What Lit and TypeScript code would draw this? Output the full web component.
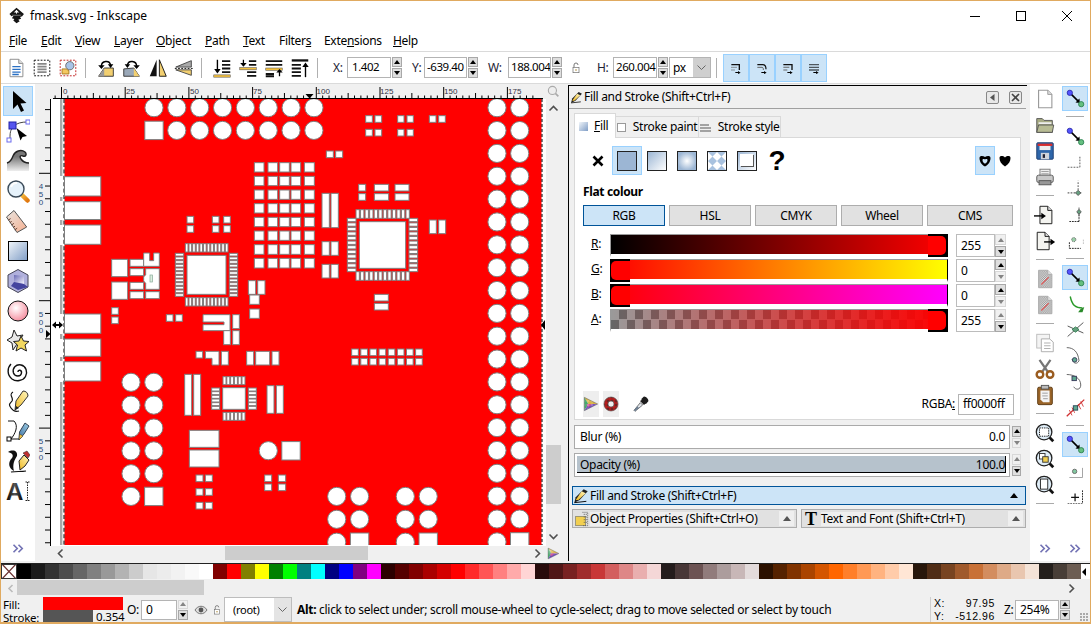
import { LitElement, html, css, svg, TemplateResult } from 'lit';
import { customElement } from 'lit/decorators.js';

const ICONS: Record<string, any> = {
  logo: svg`<path d="M12 1 L2 10 L5 13 L8 12 L5.5 16 L9 17 L7.5 19 L12 23 L16.5 20 L14.5 18 L18.5 16.5 L17 14 L20 13 L22.5 10Z" fill="#151515"/><path d="M12 4 L8 8 L10.5 7.5 L12 10 L13.5 7.5 L16 8Z" fill="#fff"/><path d="M5 11 H19 L17.5 12.5 H6.5Z" fill="#777"/>`,
  docBlue: svg`<path d="M5.5 2.5 H15 L19.5 7 V21.5 H5.5Z" fill="#fff" stroke="#888"/><path d="M15 2.5 V7 H19.5" fill="#ddd" stroke="#888"/><path d="M8 10.5 H17 M8 13.5 H17 M8 16.5 H17 M8 19 H15" stroke="#2a70c4" stroke-width="1.6"/>`,
  selAll: svg`<rect x="3.5" y="3.5" width="17" height="17" fill="#fff" stroke="#000" stroke-dasharray="2 1.5"/><path d="M7 7.5 H17 M7 10.5 H17 M7 13.5 H17 M7 16.5 H17" stroke="#888" stroke-width="2"/>`,
  selInv: svg`<rect x="3.5" y="3.5" width="17" height="17" fill="#fff" stroke="#c01818" stroke-dasharray="2 1.5"/><circle cx="14" cy="9.5" r="4.5" fill="#a8c4e8" stroke="#666"/><path d="M5.5 18.5 V13 H10 L13 15 V18.5Z" fill="#f4c860" stroke="#a87820"/>`,
  rotL: svg`<path d="M4 21 L10 12 H20 V21Z" fill="#f2cf70" stroke="#333"/><path d="M4 21 L10 12 V21Z" fill="#999"/><path d="M7 10 C7 4 16 3 17 9" fill="none" stroke="#000" stroke-width="1.6"/><path d="M3.5 9 H10.5 L7 13Z M14 8 H20 L17 12Z" fill="#000"/>`,
  rotR: svg`<path d="M3 21 V13 L14 12 L20 21Z" fill="#9aa8b8" stroke="#333"/><path d="M14 12 L20 21 H14Z" fill="#f2cf70"/><path d="M7 9 C8 3 17 4 17 10" fill="none" stroke="#000" stroke-width="1.6"/><path d="M4 8 H10 L7 12Z M13.5 9 H20.5 L17 13Z" fill="#000"/>`,
  flipH: svg`<path d="M10.5 3 V21 H3Z" fill="#111"/><path d="M13.5 3 V21 H21Z" fill="#f2cf70" stroke="#111"/>`,
  flipV: svg`<path d="M3 11 L20 4 V11Z" fill="#aaa" stroke="#444"/><path d="M3 14 H20 V20Z" fill="#f2cf70" stroke="#444"/><path d="M2 12.5 H22" stroke="#111" stroke-dasharray="2 1.5"/>`,
  lowBot: svg`<path d="M7 3 V14" stroke="#000" stroke-width="1.5"/><path d="M3.5 13 H10.5 L7 18Z" fill="#000"/><path d="M12 4.5 H21 M12 8.5 H21 M12 12.5 H21 M12 16.5 H21" stroke="#111" stroke-width="2"/><rect x="3" y="19.5" width="18" height="2.5" fill="#f2c040" stroke="#555" stroke-width=".6"/>`,
  lower: svg`<path d="M13 4.5 H21 M13 8.5 H21 M11 16.5 H21 M11 20.5 H21" stroke="#111" stroke-width="2"/><rect x="3" y="11.5" width="18" height="2.5" fill="#f2c040" stroke="#555" stroke-width=".6"/><path d="M7 3 V7" stroke="#000" stroke-width="1.4"/><path d="M3.5 6.5 H10.5 L7 10.5Z" fill="#000"/>`,
  raise: svg`<path d="M3 4.5 H21 M3 8.5 H21 M3 18.5 H12 M3 21 H12" stroke="#111" stroke-width="2"/><rect x="3" y="12" width="18" height="2.5" fill="#f2c040" stroke="#555" stroke-width=".6"/><path d="M18 21 V16" stroke="#000" stroke-width="1.4"/><path d="M14.5 17 H21.5 L18 13Z" fill="#000"/>`,
  raiseTop: svg`<rect x="3" y="2.5" width="18" height="2.5" fill="#111"/><path d="M3 8.5 H13 M3 12.5 H13 M3 16.5 H13 M3 20.5 H13" stroke="#111" stroke-width="2"/><path d="M18 22 V10" stroke="#000" stroke-width="1.5"/><path d="M14.5 11 H21.5 L18 6Z" fill="#000"/>`,
  tg1: svg`<path d="M5 7 H17 V15" fill="none" stroke="#111" stroke-width="2"/><path d="M5 11 H13 M5 15 H10" stroke="#666" stroke-width="1.5" stroke-dasharray="2 1"/><path d="M11 18 H15 V16.5 L19 19 L15 21 V19.5 H11Z" fill="#000"/>`,
  tg2: svg`<path d="M5 7 H13 C17 7 18 10 18 14" fill="none" stroke="#111" stroke-width="1.8"/><path d="M5 11 H12 C14 11 14 13 14 15" fill="none" stroke="#666" stroke-width="1.5"/><path d="M11 18 H15 V16.5 L19 19 L15 21 V19.5 H11Z" fill="#000"/>`,
  tg3: svg`<path d="M5 7 H18 V15" fill="none" stroke="#111" stroke-width="2"/><path d="M5 11 H14 M5 15 H11" stroke="#666" stroke-width="1.6"/><path d="M11 18 H15 V16.5 L19 19 L15 21 V19.5 H11Z" fill="#000"/>`,
  tg4: svg`<path d="M5 7 H19 M5 11 H19 M5 15 H19" stroke="#111" stroke-width="2" stroke-dasharray="2 1"/><path d="M11 18 H15 V16.5 L19 19 L15 21 V19.5 H11Z" fill="#000"/>`,
  lock: svg`<path d="M9 11 V7.5 A3 3 0 0 1 15 7.5" fill="none" stroke="#777" stroke-width="1.5"/><rect x="7.5" y="11" width="9" height="8" fill="#fff" stroke="#666"/><circle cx="12" cy="15" r="1.2" fill="#a83"/>`,
  select: svg`<path d="M7 2 V20 L11.5 15.5 L15 23 L18 21.5 L14.5 14.5 L20.5 14Z" fill="#000"/>`,
  node: svg`<path d="M4 20 C4 14 4 11 8 7 C11 4 16 3 21 3" fill="none" stroke="#444"/><rect x="3" y="3" width="7" height="7" fill="#5555ee" stroke="#2222aa"/><rect x="1" y="19" width="4" height="4" fill="#fff" stroke="#6a6aee"/><rect x="20" y="1" width="4" height="4" fill="#fff" stroke="#6a6aee"/><path d="M10.5 9 L21 17 L16.5 18 L14.5 21.5Z" fill="#000"/>`,
  tweak: svg`<path d="M1 14 C4 13 6 10 7 7 C9 2 15 0 19 3 C21 5 20 8 17 7 C15 6 13 7 15 10 C17 13 20 14 23 14 V22 H1Z" fill="url(#gGray)"/><path d="M1 14 C4 13 6 10 7 7 C9 2 15 0 19 3 C21 5 20 8 17 7 C15 6 13 7 15 10 C17 13 20 14 23 14" fill="none" stroke="#222" stroke-width="1.4"/>`,
  zoom: svg`<path d="M15.5 15.5 L21.5 21.5" stroke="url(#gOrange)" stroke-width="4.5" stroke-linecap="round"/><circle cx="10" cy="10" r="8" fill="#e6f2fb" stroke="#3a4a58" stroke-width="1.4"/><path d="M5 8 A6 6 0 0 1 11 4" fill="none" stroke="#fff" stroke-width="2"/>`,
  measure: svg`<path d="M.5 8 L8 1.5 L20.7 18 L11 23.5Z" fill="url(#gPeach)" stroke="#555"/><path d="M2.2 11.2 L4.6 9.6 M3.9 13.6 L5.7 12.4 M5.5 16 L7.9 14.4 M7.2 18.4 L9 17.2 M8.8 20.8 L11.2 19.2" stroke="#6a4030"/>`,
  rect: svg`<rect x="2.5" y="2.5" width="19" height="19" fill="url(#gBlueD)" stroke="#000"/>`,
  cube: svg`<path d="M12 .5 L22 6 V18 L12 23.5 L2 18 V6Z" fill="#b0b0dc" stroke="#445"/><path d="M8 6 L18 7 V15 L8 13Z" fill="url(#gWhBl)"/><path d="M8 13 L18 15 L22 18 L12 21 L5 17Z" fill="#44449e"/>`,
  circle: svg`<circle cx="12" cy="12" r="10" fill="url(#gPink)" stroke="#111"/>`,
  star: svg`<path d="M8 1 L11 7 L17 6 L14 11 L18 16 L11 15 L7 21 L6 14 L1 11 L6 8Z" fill="#e8e8e8" stroke="#222"/><path d="M15 7 L17.5 12 L23 12.5 L19 16 L20.5 22 L15 19 L10 22 L11.5 16 L7.5 12.5 L13 12Z" fill="#f2d860" stroke="#222"/>`,
  spiral: svg`<path d="M12 13 C12 10 16 11 15.5 14 C15 18 9 18 7.5 14 C6 9 10 5 15 6 C20 7 22 13 19.5 17.5 C17 22 10 23 6 20 C1 16 1 9 5 5" fill="none" stroke="#111" stroke-width="1.4"/>`,
  pencil: svg`<path d="M7 3 C2 6 8 8 6 12 C4 15 2 15 5 19 C7 22 10 23 13 22" fill="none" stroke="#111" stroke-width="1.2"/><path d="M9 21 L10 12 L17 2 C20 2 22 4 22 7 L15 16Z" fill="url(#gYellow)" stroke="#333"/><path d="M9 21 L10 17 L13 19Z" fill="#222"/>`,
  pen: svg`<path d="M2 2 H8 C13 7 9 15 5 20 H13" fill="none" stroke="#111"/><rect x="1" y="18" width="4" height="4" fill="#fff" stroke="#000"/><path d="M13 21 L13.5 13 L19 4 L23 7 L18 15Z" fill="url(#gPen)" stroke="#345"/><path d="M13 21 L13.5 15 L17 17Z" fill="#eec040" stroke="#333" stroke-width=".5"/>`,
  callig: svg`<path d="M2 3 C7 0 12 2 11 7 C9 10 6 15 8 22 C2 19 2 13 6 9 C8 6 6 4 2 3Z" fill="#111"/><path d="M5 23 C10 22 15 23 20 22" fill="none" stroke="#111" stroke-width="1.2"/><path d="M14 21 L13 12 L18 6 L23 11 L19 17Z" fill="url(#gYellow)" stroke="#222"/><path d="M17 4 L21 2 L24 6 L22 9Z" fill="#c03030" stroke="#222" stroke-width=".5"/>`,
  doc: svg`<path d="M5 2.5 H15 L19.5 7 V21.5 H5Z" fill="#fff" stroke="#999" stroke-width="1.2"/><path d="M15 2.5 V7 H19.5" fill="#ddd" stroke="#999"/>`,
  open: svg`<path d="M3 20 V5 H9 L11 7 H20 V20Z" fill="#a8ac84" stroke="#555"/><rect x="5" y="9" width="14" height="2" fill="#eee"/><path d="M3 20 L5 12 H21.5 L20 20Z" fill="#b8bc94" stroke="#555"/>`,
  save: svg`<rect x="3" y="3" width="18" height="18" rx="1" fill="#2e66aa" stroke="#1c3c6e"/><rect x="4" y="4" width="16" height="2.5" fill="#d82c2c"/><rect x="6" y="6.5" width="12" height="4.5" fill="#eee"/><rect x="7.5" y="14" width="9" height="7" fill="#cfd4dc"/><rect x="9.5" y="15.5" width="2.5" height="4" fill="#223"/>`,
  print: svg`<rect x="6.5" y="3.5" width="11" height="8" fill="#eee" stroke="#777"/><path d="M8 6 H16 M8 8.5 H16" stroke="#999"/><rect x="3" y="10" width="18" height="8" rx="2" fill="#c8c8c8" stroke="#555"/><rect x="5.5" y="16" width="13" height="4.5" fill="#999" stroke="#555"/>`,
  imp: svg`<path d="M6.5 2.5 H15 L19.5 7 V21.5 H6.5Z" fill="#f4f4f0" stroke="#111"/><path d="M15 2.5 V7 H19.5" fill="#ddd" stroke="#111"/><path d="M0 13 H9" stroke="#000" stroke-width="1.5"/><path d="M8 9.5 V16.5 L13 13Z" fill="#000"/>`,
  exp: svg`<path d="M3.5 2.5 H12 L16.5 7 V21.5 H3.5Z" fill="#f4f4f0" stroke="#111"/><path d="M12 2.5 V7 H16.5" fill="#ddd" stroke="#111"/><path d="M11 13 H19" stroke="#000" stroke-width="1.5"/><path d="M18 9.5 V16.5 L23 13Z" fill="#000"/>`,
  faint: svg`<path d="M5 2.5 H15 L19.5 7 V21.5 H5Z" fill="url(#pCheck)" stroke="#aaa"/><path d="M8 18 L16 10" stroke="#e05a5a" stroke-width="1.2"/><path d="M15 2.5 V7 H19.5" fill="#e4e4e4" stroke="#aaa"/>`,
  copy: svg`<rect x="3" y="2.5" width="14" height="15" fill="#f4f4f4" stroke="#bbb"/><path d="M8 7.5 H17 L21 11 V21.5 H8Z" fill="#fff" stroke="#aaa"/><path d="M11 12 H18 M11 15 H18 M11 18 H18" stroke="#aaa"/>`,
  cut: svg`<path d="M6 2 L15 15 M18 2 L9 15" stroke="#777" stroke-width="2.4"/><circle cx="6.5" cy="18" r="3.6" fill="none" stroke="#9a5c20" stroke-width="2.6"/><circle cx="17.5" cy="18" r="3.6" fill="none" stroke="#9a5c20" stroke-width="2.6"/>`,
  paste: svg`<rect x="4" y="3.5" width="16" height="19" rx="1.5" fill="#9a6428" stroke="#5c3a14"/><rect x="8" y="1.5" width="8" height="4" fill="#bbb" stroke="#555"/><path d="M7 7 H17 V20 H10 L7 17Z" fill="#f4f4f4"/><path d="M9 10 H15 M9 13 H15 M10 16 H15" stroke="#999"/>`,
  zs: svg`<path d="M17 17 L21 21" stroke="#111" stroke-width="3"/><circle cx="11" cy="11" r="8.5" fill="#e0eef8" stroke="#222" stroke-width="1.4"/><rect x="6" y="6.5" width="10" height="9" fill="#fff" stroke="#111" stroke-dasharray="1.5 1"/>`,
  zd: svg`<path d="M17 17 L21 21" stroke="#111" stroke-width="3"/><circle cx="11" cy="11" r="8.5" fill="#e0eef8" stroke="#222" stroke-width="1.4"/><rect x="6" y="6" width="6" height="6" fill="#fff" stroke="#333"/><rect x="9.5" y="9.5" width="6" height="6" fill="#f2cf50" stroke="#333"/>`,
  zp: svg`<path d="M17 17 L21 21" stroke="#111" stroke-width="3"/><circle cx="11" cy="11" r="8.5" fill="#e0eef8" stroke="#222" stroke-width="1.4"/><rect x="7" y="5.5" width="8" height="11" fill="#fff" stroke="#222"/>`,
  snap: svg`<path d="M7 7 L15 15" stroke="#000" stroke-width="1.8"/><path d="M12 16.5 L17 17 L16.5 12Z" fill="#000"/><circle cx="5.5" cy="5.5" r="3" fill="#5555ff" stroke="#2828a8"/><circle cx="18.5" cy="18.5" r="3" fill="#66c080" stroke="#2a8050"/>`,
  s1: svg`<path d="M3 17.5 H17 M17 17.5 V4" stroke="#666" stroke-width="1.2" stroke-dasharray="2 1.4"/>`,
  s2: svg`<path d="M3 17 H20 M15 17 V3" stroke="#666" stroke-width="1.2" stroke-dasharray="2 1.4"/><path d="M15 14 L18 17 L15 20 L12 17Z" fill="#66a080" stroke="#555"/>`,
  s3: svg`<path d="M5 20 H16 M16 20 V10" stroke="#111" stroke-dasharray="2 1"/><path d="M16 4 V14" stroke="#555" stroke-dasharray="2 1"/><path d="M16 6 L18.5 9 L16 12 L13.5 9Z" fill="#66a080" stroke="#555"/>`,
  s4: svg`<path d="M5 21 H18 M5 14 V21" stroke="#111" stroke-dasharray="2 1"/><path d="M21 11 V17" stroke="#bbb" stroke-dasharray="2 1"/><circle cx="10" cy="11" r="2.4" fill="#9ad0a8" stroke="#555" stroke-dasharray="1.2 .8"/>`,
  s5: svg`<path d="M6 4 C8 14 12 17 20 17" fill="none" stroke="#2a9a2a" stroke-width="1.6"/><path d="M15 22 L20 22 L22 16 L18 18Z" fill="#2a8a2a"/>`,
  s6: svg`<path d="M3 20 L21 4 M3 8 L21 16" stroke="#444"/><path d="M12 9 L16 12 L12 15 L8 12Z" fill="#66a080" stroke="#2a7a4a"/>`,
  s7: svg`<path d="M2 3 C10 3 15 8 16 18 C14 22 10 22 8 16" fill="none" stroke="#555"/><circle cx="11" cy="17" r="2.6" fill="#60a890" stroke="#335"/>`,
  s8: svg`<path d="M2 4 C10 4 18 8 18 16 C18 22 12 22 10 18" fill="none" stroke="#555"/><rect x="8" y="6" width="5" height="5" fill="#60a890" stroke="#335"/>`,
  s9: svg`<path d="M2 22 L22 3" stroke="#d03030" stroke-width="1.5"/><path d="M5 15 L8 21 M8 12 L11 18 M15 8 L18 14 M18 5 L21 11" stroke="#d03030"/><rect x="9.5" y="10" width="5" height="5" fill="#60a890" stroke="#245"/>`,
  s10: svg`<path d="M20 9 V20 H5" fill="none" stroke="#999"/><circle cx="11" cy="13" r="2.5" fill="#80c8a0" stroke="#666"/>`,
  s11: svg`<path d="M3 20 H20" stroke="#666" stroke-dasharray="2 1"/><path d="M20 5 V20" stroke="#111" stroke-dasharray="2 1"/><path d="M7 13 H16 M11.5 8.5 V17.5" stroke="#111" stroke-width="1.4"/>`,
  pen2: svg`<path d="M2 22 L4 14 L16 2 L22 5 L10 18Z" fill="#222"/><path d="M13 5 L19 8 L8 18 L4 18Z" fill="url(#gYellow)"/><path d="M2 22 L20 20" stroke="#111" stroke-width="1.5"/>`,
  objP: svg`<rect x="4" y="8" width="15" height="14" fill="#f2cf50" stroke="#776"/><path d="M14 2 H22 V22 H14 M16 5 H21 M16 9 H21 M16 13 H21 M16 17 H21" fill="none" stroke="#555" stroke-dasharray="2 1"/>`,
  dropper: svg`<path d="M3 23 L1.5 21.5 L11 10 L14.5 13.5Z" fill="#dfe4ea" stroke="#333"/><path d="M3 23 L1.5 21.5 L6.5 15.5 L9 18Z" fill="#6d7f92"/><path d="M10.5 7.5 L16.5 13.5 L18.5 11.5 L19.5 12 L23 8 C24 5 19 0 16 1 L12.5 4.5 L13 6Z" fill="#1c1c1c"/>`,
  wheel: svg`<path d="M2 2 L22 12 L8 12Z" fill="#d8b040"/><path d="M2 2 L8 12 L2 22Z" fill="#40a868"/><path d="M2 22 L8 12 L22 12Z" fill="#7048b8"/><path d="M5 12 L14 12 L8 17Z" fill="#c84890"/><path d="M2 2 L22 12 L2 22Z" fill="url(#pCheckL)" stroke="#555" stroke-width=".7"/>`,
  ring: svg`<circle cx="12" cy="12" r="10.5" fill="#c01c1c" stroke="#555"/><circle cx="12" cy="12" r="10" fill="url(#pDots)"/><circle cx="12" cy="12" r="4.5" fill="#eee" stroke="#555"/>`,
  chev: svg`<path d="M4 6 L10 12 L4 18 M12 6 L18 12 L12 18" fill="none" stroke="#7272b4" stroke-width="2.6"/>`,
};
const ic = (n: string, s = 24) => html`<svg class="ic" width=${s} height=${s} viewBox="0 0 24 24">${ICONS[n]}</svg>`;
const textTool = html`<svg class="ic" width="26" height="28" viewBox="-1 -2 26 28"><text x="0" y="20.5" font-family="Liberation Sans" font-weight="700" font-size="24" letter-spacing="0" fill="url(#gText)">A</text><path d="M19.5 3 H23.5 M19.5 21.5 H23.5 M21.5 3 V21.5" stroke="#222" stroke-dasharray="1.5 1"/></svg>`;

const spin = (up = true, down = true) => html`<div class="spin"><b class="up ${up ? '' : 'off'}"></b><b class="dn ${down ? '' : 'off'}"></b></div>`;

/* ------------- printed-circuit drawing, page coordinates ------------- */
type R = [number, number, number, number];
const z5x = (x: number) => 100 + x / 3, z5y = (y: number) => 95 + y / 3, z6y = (y: number) => 310 + y / 3;
const rectEl = (x0: number, y0: number, x1: number, y1: number) => svg`<rect x=${x0} y=${y0} width=${x1 - x0} height=${y1 - y0}/>`;
const z5 = (a: R[]) => a.map(r => rectEl(z5x(r[0]), z5y(r[1]), z5x(r[2]), z5y(r[3])));
const z6 = (a: R[]) => a.map(r => rectEl(z5x(r[0]), z6y(r[1]), z5x(r[2]), z6y(r[3])));
const poly = (pts: number[], ym: (y: number) => number) => { let s = ''; for (let i = 0; i < pts.length; i += 2) s += `${z5x(pts[i])},${ym(pts[i + 1])} `; return svg`<polygon points=${s}/>`; };
const range = (n: number) => Array.from({ length: n }, (_, i) => i);
const circ = (x: number, y: number) => svg`<circle cx=${x} cy=${y} r="9.1"/>`;
const sq = (x: number, y: number) => rectEl(x - 9.2, y - 9.2, x + 9.2, y + 9.2);

function quad(ym: 'z5' | 'z6', x0: number, x1: number, y0: number, y1: number, n: number, w: number, l: number, gap: number, hx0: number, hx1: number, vy0: number, vy1: number) {
  const m = ym === 'z5' ? z5 : z6;
  const out: R[] = [];
  const ph = (hx1 - hx0 - w) / (n - 1), pv = (vy1 - vy0 - w) / (n - 1);
  range(n).forEach(i => {
    const px = hx0 + ph * i, py = vy0 + pv * i;
    out.push([px, y0 - gap - l, px + w, y0 - gap], [px, y1 + gap, px + w, y1 + gap + l]);
    out.push([x0 - gap - l, py, x0 - gap, py + w], [x1 + gap, py, x1 + gap + l, py + w]);
  });
  out.push([x0, y0, x1, y1]);
  return m(out);
}

const gridPads: R[] = [];
[[463, 492], [504, 533], [539, 568], [573, 602], [613, 643]].forEach(c =>
  [[203, 231], [244, 272], [285, 313], [326, 354], [367, 395], [408, 436], [449, 478], [490, 519]].forEach(r => gridPads.push([c[0], r[0], c[1], r[1]])));
const grid2: R[] = [];
range(8).forEach(i => { const x = 755 + 27.4 * i; grid2.push([x, 117, x + 20, 137], [x, 145, x + 20, 165]); });

const pitch = 22.85;
const pcb = svg`
  <rect x="51" y="99" width="495" height="447" fill="#fff"/>
  <rect x="60" y="99" width="2.4" height="447" fill="#a8a8a8"/>
  <rect x="64.5" y="99" width="477" height="446" fill="#f00"/>
  <g fill="#fff" stroke="none">
    ${[176, 201, 225, 314, 339, 361].map((y, i) => svg`<rect x="52" y=${y} width="13" height=${[21, 19, 20, 20, 18, 21][i]}/>`)}
  </g>
  <line x1="64" y1="99" x2="64" y2="545" stroke="#000" stroke-dasharray="4 2.4"/>
  <line x1="542" y1="99" x2="542" y2="545" stroke="#000" stroke-dasharray="3 2"/>
  <g fill="#fff" stroke="#7f7f7f" stroke-width="1">
    ${[[176.7, 196], [201.7, 219.5], [225, 244.3], [314, 333.3], [339, 356.3], [361.7, 381]].map(r => rectEl(64.5, r[0], 100.8, r[1]))}
    ${range(8).map(i => circ(154 + pitch * i, 107.7))}
    ${sq(154, 130.4)}
    ${range(7).map(i => circ(176.8 + pitch * i, 130.4))}
    ${range(19).map(i => svg`${circ(497, 107.7 + pitch * i)}${circ(519.7, 107.7 + pitch * i)}`)}
    ${circ(497, 541.9)}${sq(519.7, 541.9)}
    ${range(5).map(i => svg`${circ(131, 382.3 + pitch * i)}${circ(153.8, 382.3 + pitch * i)}`)}
    ${circ(131, 496.4)}${sq(153.8, 496.4)}
    ${[[336.7, 359.6], [405.3, 428.2]].map(c => svg`
      ${circ(c[0], 496.4)}${circ(c[1], 496.4)}${circ(c[0], 519.3)}${circ(c[1], 519.3)}${circ(c[0], 542.2)}${sq(c[1], 542.2)}`)}
    ${circ(268.3, 450.7)}${sq(291, 450.8)}
    ${z5(gridPads)}
    ${z5([[797, 62, 817, 82], [825, 62, 845, 82], [797, 103, 817, 123], [825, 103, 845, 123], [893, 62, 912, 82], [921, 62, 940, 82], [893, 103, 912, 123], [921, 103, 940, 123], [988, 62, 1008, 82], [1016, 62, 1036, 82],
      [679, 168, 700, 188], [707, 168, 728, 188],
      [666, 295, 688, 398], [693, 295, 715, 398], [666, 440, 688, 481], [693, 440, 715, 481], [666, 508, 688, 549], [693, 508, 715, 549],
      [261, 364, 281, 384], [261, 392, 281, 412], [337, 364, 357, 384], [337, 392, 357, 412], [371, 364, 391, 384], [371, 392, 391, 412],
      [35, 493, 83, 545], [35, 561, 83, 613], [90, 493, 131, 514], [90, 521, 131, 542], [90, 562, 131, 583], [90, 590, 131, 611], [137, 590, 178, 611],
      [35, 638, 55, 658], [35, 666, 55, 686], [199, 659, 219, 679], [227, 659, 247, 679],
      [445, 557, 467, 598], [473, 557, 495, 598], [449, 600, 478, 628], [449, 642, 478, 670],
      [823, 598, 865, 618], [823, 625, 865, 645],
      [776, 268, 797, 288], [776, 296, 797, 316], [823, 268, 866, 288], [823, 296, 866, 316], [885, 268, 927, 288], [885, 296, 927, 316],
      [988, 375, 1009, 416], [1016, 375, 1037, 416]])}
    ${poly([131, 474, 149, 474, 149, 497, 161, 497, 161, 474, 178, 474, 178, 514, 131, 514], z5y)}
    ${poly([137, 521, 178, 521, 178, 583, 137, 583, 137, 565, 131, 558, 131, 545, 137, 540], z5y)}
    ${quad('z5', 261, 378, 481, 598, 12, 8, 25, 10, 256, 384, 475, 604)}
    ${quad('z5', 778, 917, 380, 520, 12, 10, 26, 10, 768, 928, 370, 530)}
    ${poly([309, 14, 390, 14, 390, 62, 309, 62, 309, 44, 372, 44, 372, 36, 309, 36], z6y)}
    ${poly([316, 124, 357, 124, 357, 165, 336, 165, 336, 145, 316, 145], z6y)}
    ${z6([[398, 14, 418, 56], [371, 62, 391, 104], [398, 62, 418, 104], [288, 124, 308, 144], [364, 124, 385, 165], [440, 124, 461, 165], [467, 124, 509, 165], [516, 124, 537, 165],
      [254, 193, 275, 316], [281, 193, 302, 316], [501, 227, 522, 310], [529, 227, 550, 310],
      [268, 361, 357, 412], [268, 420, 357, 471],
      [288, 495, 309, 515], [316, 495, 337, 515], [288, 536, 309, 556], [316, 536, 337, 556], [288, 577, 309, 597], [316, 577, 337, 597],
      [494, 495, 515, 515], [535, 495, 557, 515], [494, 522, 515, 542], [535, 522, 557, 542]])}
    ${z6(grid2)}
    ${quad('z6', 368, 436, 233, 298, 6, 9, 24, 9, 369, 435, 234, 298)}
  </g>
  <rect x="150" y=${z5y(540)} width="2.6" height="7" fill="#dceee0" stroke="#8a9" stroke-width=".7"/>
  <rect x="51" y="545" width="495" height="2" fill="#fff"/>
  <path d="M52 325 L56 321.5 V324 H59 V321.5 L63 325 L59 328.5 V326 H56 V328.5Z" fill="#000"/>
  <path d="M545 320 L541 325 L545 330Z" fill="#000"/>
`;

const hMajors = [[61, '0'], [124, '25'], [188, '50'], [251, '75'], [314.5, '100'], [378, '125'], [442, '150'], [506, '175']] as [number, string][];
const hruler = svg`
  <path d="M53 98.5 H543" stroke="#000" fill="none"/>
  ${range(76).map(i => { const x = 61 + 6.37 * (i - 1) + .5; if (x < 54) return null; const major = (i - 1) % 10 === 0; const mid = (i - 1) % 5 === 0; return svg`<line x1=${x} x2=${x} y1="98" y2=${major ? 87 : mid ? 93 : 95.5} stroke="#000"/>`; })}
  ${hMajors.map(m => svg`<text x=${m[0] + 2} y="94" class="rt">${m[1]}</text>`)}
  <path d="M305.5 94 H313.5 L309.5 98.5Z" fill="#000"/>`;
const vruler = svg`
  <path d="M50.5 99 V546" stroke="#000" fill="none"/>
  ${range(36).map(i => { const y = 110 + 12.74 * i - .4; const major = Math.abs((y - 174) % 127.4) < 1 || Math.abs((y - 174) % 127.4) > 126.4; return svg`<line x1="50" x2=${major ? 39 : 45} y1=${y} y2=${y} stroke="#000"/>`; })}
  ${[[174, '450'], [301.5, '500'], [428.5, '550']].map(m => (m[1] as string).split('').map((d, i) => svg`<text x="41" y=${(m[0] as number) + 15 + 8 * i} text-anchor="middle" class="rv">${d}</text>`))}
  <path d="M46 330 L50.5 334 L46 338Z" fill="#000"/>`;

const PAL = ['000000', '1a1a1a', '333333', '4d4d4d', '666666', '808080', '999999', 'b3b3b3', 'cccccc', 'e6e6e6', 'ececec', 'f2f2f2', 'f9f9f9', 'ffffff',
  '800000', 'ff0000', '808000', 'ffff00', '008000', '00ff00', '008080', '00ffff', '000080', '0000ff', '800080', 'ff00ff',
  '2b0000', '550000', '800000', 'aa0000', 'd40000', 'ff0000', 'ff2a2a', 'ff5555', 'ff8080', 'ffaaaa', 'ffd5d5',
  '280b0b', '501616', '782121', 'a02c2c', 'c83737', 'd35f5f', 'de8787', 'e9afaf', 'f4d7d7',
  '241c1c', '483737', '6c5353', '917c7c', 'ac9d9d', 'c8b7b7', 'e3dbdb',
  '2b1100', '552200', '803300', 'aa4400', 'd45500', 'ff6600', 'ff7f2a', 'ff9955', 'ffb380', 'ffccaa', 'ffe6d5',
  '28170b', '502d16', '784421', 'a05a2c', 'c87137', 'd38d5f', 'deaa87', 'e9c6af', 'f4e3d7',
  '241f1c', '483e37', '6c5d53'];

const LEFT = ['select', 'node', 'tweak', 'zoom', 'measure', 'rect', 'cube', 'circle', 'star', 'spiral', 'pencil', 'pen', 'callig'];
const CMD: (string | null)[] = ['doc', 'open', 'save', 'print', null, 'imp', 'exp', null, 'faint', 'faint', null, 'copy', 'cut', 'paste', null, 'zs', 'zd', 'zp', null];
const SNAP: (string | null)[] = ['*snap', null, 'snap', 's1', 's2', 's3', 's4', null, '*snap', 's5', 's6', 's7', 's8', 's9', null, '*snap', 's10', 's11'];

const toolCol = (list: (string | null)[], s: number) => list.map(n => n === null ? html`<div class="hsep"></div>` :
  n[0] === '*' ? html`<div class="rtool on">${ic(n.slice(1), s)}</div>` : html`<div class="rtool">${ic(n, s)}</div>`);

@customElement('app-root')
export class AppRoot extends LitElement {
  static styles = css`
    :host { display: block; width: 1091px; height: 624px; overflow: hidden; }
    * { box-sizing: border-box; }
    .win { width: 1091px; height: 624px; border: 1px solid #e0aa60; border-bottom-width: 2px; background: #f0f0f0; display: flex; flex-direction: column;
      font: 12px/14px "Noto Sans", sans-serif; letter-spacing: -.3px; color: #000; }
    .ic { display: block; flex: none; }
    .defs { position: absolute; width: 0; height: 0; }
    .title { height: 29px; background: #fff; display: flex; align-items: center; padding-left: 7px; flex: none; }
    .title .name { margin-left: 5px; letter-spacing: 0; font-size: 12px; }
    .ctrls { margin-left: auto; display: grid; grid-template-columns: 46px 46px 46px; justify-items: center; width: 138px; }
    .menu { height: 22px; background: #fff; border-bottom: 1px solid #dadada; flex: none; display: grid; padding-left: 8px; align-items: center;
      grid-template-columns: 32px 34px 39px 42px 49px 38px 36px 45px 69px auto; }
    .tbar { height: 32px; background: #fff; border-bottom: 1px solid #dadada; flex: none; display: flex; align-items: center; padding-left: 2px; }
    .tb { width: 26px; height: 24px; display: flex; align-items: center; justify-content: center; flex: none; }
    .vsep { width: 1px; height: 20px; background: #b0b0b0; margin: 0 7px 0 4px; flex: none; }
    .lab { flex: none; text-align: left; color: #223; }
    .field { height: 21px; border: 1px solid #b4b4b4; background: #fff; padding: 2px 0 0 4px; flex: none; white-space: nowrap; overflow: hidden; }
    .tbar .field { font-size: 11.5px; letter-spacing: -.45px; padding-top: 2px; }
    .spin { width: 10px; height: 21px; display: flex; flex-direction: column; flex: none; margin-left: 1px; gap: 1px; }
    .spin b { flex: 1; background: #dedede; border: 1px solid #a8a8a8; position: relative; display: block; }
    .spin b::after { content: ""; position: absolute; left: 50%; top: 50%; margin: -2px 0 0 -3px; border: 3px solid transparent; }
    .spin .up::after { border-bottom: 4px solid #000; border-top: 0; }
    .spin .dn::after { border-top: 4px solid #000; border-bottom: 0; }
    .spin b.off { background: #f0f0f0; border-color: #d8d8d8; }
    .spin b.off::after { opacity: .45; }
    .combo { height: 21px; width: 42px; border: 1px solid #b4b4b4; background: #fff; margin-left: 1px; display: flex; align-items: center; padding-left: 3px; flex: none; justify-content: space-between; }
    .combo i { width: 17px; height: 19px; background: #cfcfcf; display: flex; align-items: center; justify-content: center; flex: none; }
    .toggles { display: flex; height: 28px; margin-left: 0; }
    .toggles div { width: 26px; background: #cce4f7; border: 1px solid #99d1ff; display: flex; align-items: center; justify-content: center; }
    .main { flex: none; height: 477px; display: flex; }
    .ltools { width: 34px; background: #fff; flex: none; display: flex; flex-direction: column; align-items: center; padding-top: 2px; }
    .ltool { width: 30px; height: 30px; flex: none; display: flex; align-items: center; justify-content: center; border: 1px solid transparent; }
    .ltool.on, .rtool.on { background: #cce4f7; border: 1px solid #99d1ff; }
    .chevs { margin-top: auto; height: 20px; flex: none; }
    .center { width: 533px; flex: none; display: grid; grid-template-columns: 16px 495px 15px 7px; grid-template-rows: 15px 447px 15px; }
    .rl { display: block; }
    .rt { font: 8px "Liberation Sans", sans-serif; letter-spacing: 0; fill: #334; }
    .rv { font: 8px "Liberation Sans", sans-serif; letter-spacing: 0; fill: #2a4a7a; }
    .zbox { display: flex; justify-content: center; align-items: center; }
    .vscroll { display: flex; flex-direction: column; align-items: center; position: relative; }
    .vthumb { position: absolute; left: 0; right: 0; top: 346px; height: 59px; background: #cdcdcd; }
    .hscroll { display: flex; align-items: center; position: relative; }
    .hthumb { position: absolute; left: 174px; width: 143px; top: 0; height: 14px; background: #cdcdcd; }
    .dock { width: 462px; flex: none; padding-top: 1px; }
    .panel { height: 476px; border-left: 1px solid #000; border-top: 1px solid #000; width: 459px; display: flex; flex-direction: column; }
    .phead { height: 23px; flex: none; border-bottom: 1px solid #a0a0a0; display: flex; align-items: center; padding-left: 1px; margin-right: 1px; gap: 1px; }
    .phead .btn { width: 13px; height: 13px; border: 1px solid #888; border-radius: 2px; background: #e8e8e8; display: flex; align-items: center; justify-content: center; margin-left: 9px; }
    .tabs { display: flex; margin: 4px 0 0 5px; height: 24px; align-items: flex-end; flex: none; }
    .tab { height: 21px; border: 1px solid #d9d9d9; border-bottom: 0; background: #f0f0f0; display: flex; align-items: center; padding-left: 1px; gap: 4px; margin-left: -1px; flex: none; }
    .tab.on { height: 25px; background: #fff; margin-left: 0; padding-left: 4px; margin-bottom: -1px; position: relative; z-index: 1; gap: 6px; }
    .tabc { margin-left: 5px; width: 447px; height: 283px; border: 1px solid #d9d9d9; background: #fff; padding: 8px 5px 2px 8px; flex: none; display: flex; flex-direction: column; }
    .paint { display: flex; height: 29px; flex: none; align-items: center; }
    .pb { width: 30px; height: 29px; display: flex; align-items: center; justify-content: center; flex: none; }
    .pb.on { background: #cce4f7; border: 1px solid #99d1ff; }
    .sw { width: 20px; height: 20px; border: 1px solid #222; flex: none; }
    .flat { background: #9cb6d4; }
    .lin { background: linear-gradient(135deg, #9cb6d4, #fff); }
    .rad { background: radial-gradient(circle, #fff, #9cb6d4 75%); }
    .pat { background: #fff; }
    .swa { background: linear-gradient(135deg, #9cb6d4, #fff); padding: 2px 3px 4px 2px; }
    .swa u { display: block; height: 100%; background: #fff; box-shadow: 1px 1px 0 #555; }
    .q { font: 700 28px/28px "Liberation Sans", sans-serif; letter-spacing: 0; }
    .flatc { font-weight: 700; height: 14px; margin-top: 10px; flex: none; letter-spacing: -.35px; }
    .modes { display: grid; grid-template-columns: 82px 82px 82px 82px 86px; gap: 4px; margin-top: 6px; height: 21px; flex: none; }
    .mode { background: #e1e1e1; border: 1px solid #adadad; text-align: center; line-height: 19px; }
    .mode.on { background: #cce4f7; border-color: #005499; }
    .rows { margin-top: 8px; display: flex; flex-direction: column; gap: 2px; flex: none; }
    .row { display: flex; height: 23px; align-items: stretch; }
    .row .lbl { width: 27px; padding: 3px 0 0 8px; flex: none; }
    .bar { width: 338px; flex: none; position: relative; border-top: 1px solid #9a9a9a; border-left: 1px solid #9a9a9a; border-bottom: 3px solid #fff; }
    .bar.r { background: linear-gradient(to right, #000, #f00); }
    .bar.g { background: linear-gradient(to right, #f00, #ff0); border-right: 1px solid #000; }
    .bar.b { background: linear-gradient(to right, #f00, #f0f); border-right: 1px solid #000; }
    .bar.a { background: linear-gradient(to right, rgba(255,0,0,0), #f00), repeating-conic-gradient(#666 0 25%, #9a9a9a 0 50%) 0 0 / 16px 19px; }
    .thumb { position: absolute; width: 20px; top: -1px; bottom: -3px; background: #000; padding: 1.5px 0 2px; }
    .thumb.rgt { right: 0; padding-right: 2px; }
    .thumb.lft { left: -1px; padding-left: 1px; }
    .thumb u { display: block; height: 100%; background: #f00; }
    .thumb.rgt u { border-radius: 0 5px 5px 0; }
    .thumb.lft u { border-radius: 5px 0 0 5px; }
    .row .field { width: 39px; margin-left: 8px; border-color: #bcbcbc; padding-top: 4px; height: 23px; }
    .row .spin { width: 11px; height: 23px; margin-left: 0; }
    .bottom { margin-top: auto; height: 26px; display: flex; align-items: center; flex: none; }
    .ibx { width: 16px; height: 26px; background: #eee; display: flex; align-items: center; justify-content: center; margin-right: 4px; flex: none; }
    .rgba { margin-left: auto; display: flex; align-items: center; gap: 3px; margin-right: 1px; }
    .rgba .field { width: 56px; }
    .scale { margin: 5px 0 0 5px; height: 24px; display: flex; width: 447px; flex: none; }
    .scale .sbox { width: 436px; border: 1px solid #aaa; background: #fff; display: flex; justify-content: space-between; align-items: center; padding: 0 4px 0 5px; flex: none; }
    .scale .spin { height: 22px; margin: 1px 0 0 2px; width: 9px; }
    .scale .sbox.fillb { background: #b6c2cc; box-shadow: inset 2px 2px 0 #fff, inset -3px -3px 0 #fff, inset -4px -4px 0 #000; }
    .ditem { margin: 0 0 0 3px; height: 19px; border: 1px solid #adadad; background: #e1e1e1; display: flex; align-items: center; flex: none; }
    .ditem.on { background: #cce4f7; border-color: #005499; width: 454px; margin-top: 9px; }
    .ditem .txt { background: #efefef; margin-left: 1px; }
    .ditem.on .txt { background: none; }
    .ditem .arr { margin-left: auto; width: 15px; height: 15px; display: flex; align-items: center; justify-content: center; margin-right: 2px; background: #efefef; }
    .ditem.on .arr { background: none; margin-right: 4px; }
    .arr::after { content: ""; border: 4px solid transparent; border-top: 0; border-bottom: 5px solid #000; }
    .ditem .arr.dim::after { border-bottom-color: #555; }
    .drow { display: flex; gap: 4px; margin: 4px 0 0 3px; }
    .drow .ditem { margin: 0; flex: none; }
    .tt { font: 700 18px/16px "Liberation Serif", serif; width: 18px; text-align: center; flex: none; letter-spacing: 0; }
    .rbars { width: 60px; flex: none; background: #fff; display: grid; grid-template-columns: 30px 30px; }
    .rcol { display: flex; flex-direction: column; align-items: center; padding-top: 2px; min-height: 0; height: 477px; }
    .rtool { width: 26px; height: 26px; display: flex; align-items: center; justify-content: center; flex: none; }
    .rtool.on { height: 25px; }
    .hsep { width: 18px; height: 12px; position: relative; flex: none; }
    .hsep::after { content: ""; position: absolute; left: 0; right: 0; top: 5px; height: 1px; background: #aaa; }
    .pal { margin-top: 2px; height: 16px; display: flex; border-top: 1px solid #222; flex: none; background: #fff; }
    .pal .x { width: 16px; height: 15px; flex: none; margin-right: 0; }
    .pal i { width: 14.01px; height: 15px; flex: none; display: block; }
    .pal .more { margin-left: auto; width: 8px; display: flex; align-items: center; }
    .pal .more::after { content: ""; border: 4px solid transparent; border-left: 0; border-right: 4px solid #000; }
    .hs2 { height: 18px; flex: none; display: flex; align-items: center; position: relative; background: #f0f0f0; }
    .hs2 .th { position: absolute; left: 16px; width: 187px; top: 1px; height: 15px; background: #cdcdcd; }
    .status { height: 25px; flex: none; display: flex; align-items: stretch; background: #f0f0f0; }
    .fs { width: 42px; padding: 1px 0 0 2px; line-height: 13px; flex: none; font-size: 11.5px; letter-spacing: -.2px; }
    .cols { width: 80px; flex: none; display: flex; flex-direction: column; }
    .cols .f { height: 13px; background: #f00; flex: none; }
    .cols .s { display: flex; height: 12px; flex: none; }
    .cols .s b { width: 50px; background: #555; display: block; flex: none; }
    .cols .s span { margin-left: 3px; font-size: 11.5px; line-height: 13px; letter-spacing: -.2px; }
    .ofield { display: flex; align-items: center; margin-left: 4px; flex: none; }
    .ofield .field { width: 36px; height: 20px; padding-top: 2px; }
    .ofield .spin { height: 20px; }
    .rootc { width: 68px; height: 25px; border: 1px solid #bdbdbd; background: #fff; display: flex; align-items: center; margin-left: 0; flex: none; padding-left: 8px; font-size: 11px; justify-content: space-between; letter-spacing: -.3px; }
    .rootc i { width: 17px; height: 23px; background: #e4e4e4; display: flex; align-items: center; justify-content: center; }
    .msg { margin-left: 5px; flex: none; width: 600px; align-self: center; white-space: nowrap; font-size: 12px; }
    .coord { margin-left: 33px; border-left: 1px solid #cfcfcf; width: 74px; padding: 0 0 0 3px; flex: none; display: grid; grid-template-columns: 14px 47px; grid-auto-rows: 12.5px; line-height: 12.5px;
      font: 10.5px/12.5px "Liberation Sans", sans-serif; letter-spacing: .6px; }
    .coord b { font-weight: 400; text-align: right; }
    .zoomf { display: flex; align-items: center; flex: none; }
    .zoomf .zl { width: 11px; flex: none; }
    .zoomf .field { width: 44px; height: 20px; padding-top: 2px; }
    .zoomf .spin { height: 20px; }
    .grip { margin: auto 2px 1px auto; width: 8px; height: 8px; background: radial-gradient(circle at 1px 1px, #aaa 1px, transparent 1.2px) 0 0 / 3px 3px; }
  `;

  render(): TemplateResult {
    return html`
    <div class="win">
      <svg class="defs" aria-hidden="true"><defs>
        <linearGradient id="gGray" x1="0" y1="0" x2="0" y2="1"><stop offset=".3" stop-color="#777"/><stop offset="1" stop-color="#eee"/></linearGradient>
        <linearGradient id="gOrange" x1="0" y1="0" x2="1" y2="1"><stop offset="0" stop-color="#f8c040"/><stop offset="1" stop-color="#e07810"/></linearGradient>
        <linearGradient id="gBlueD" x1="1" y1="1" x2="0" y2="0"><stop offset="0" stop-color="#7f9dc6"/><stop offset="1" stop-color="#f2f6fa"/></linearGradient>
        <linearGradient id="gPeach" x1="0" y1="0" x2="1" y2="1"><stop offset="0" stop-color="#e8e4e0"/><stop offset="1" stop-color="#f6b090"/></linearGradient>
        <linearGradient id="gWhBl" x1="0" y1="0" x2="1" y2="1"><stop offset="0" stop-color="#6a6ab4"/><stop offset="1" stop-color="#f4f4ff"/></linearGradient>
        <radialGradient id="gPink" cx=".4" cy=".35" r=".7"><stop offset="0" stop-color="#fff"/><stop offset="1" stop-color="#f58a9c"/></radialGradient>
        <linearGradient id="gYellow" x1="1" y1="0" x2="0" y2="1"><stop offset="0" stop-color="#fff6c0"/><stop offset="1" stop-color="#eeb820"/></linearGradient>
        <linearGradient id="gPen" x1="1" y1="0" x2="0" y2="1"><stop offset="0" stop-color="#a0d0e8"/><stop offset="1" stop-color="#3c6e9e"/></linearGradient>
        <linearGradient id="gText" x1="0" y1="0" x2="1" y2="0"><stop offset="0" stop-color="#000"/><stop offset=".5" stop-color="#555"/><stop offset="1" stop-color="#000"/></linearGradient>
        <pattern id="pCheck" width="2" height="2" patternUnits="userSpaceOnUse"><rect width="2" height="2" fill="#eee"/><rect width="1" height="1" fill="#888"/><rect x="1" y="1" width="1" height="1" fill="#888"/></pattern>
        <pattern id="pCheckL" width="2" height="2" patternUnits="userSpaceOnUse"><rect width="1" height="1" fill="#fff" fill-opacity=".45"/></pattern>
        <pattern id="pDots" width="2" height="2" patternUnits="userSpaceOnUse"><rect width="1" height="1" fill="#2a2a2a"/></pattern>
      </defs></svg>

      <div class="title">
        ${ic('logo', 17)}<span class="name">fmask.svg - Inkscape</span>
        <div class="ctrls">
          <svg width="12" height="12"><path d="M1 6.5 H11" stroke="#000"/></svg>
          <svg width="12" height="12"><rect x="1.5" y="1.5" width="9" height="9" fill="none" stroke="#000"/></svg>
          <svg width="12" height="12"><path d="M1 1 L11 11 M11 1 L1 11" stroke="#000"/></svg>
        </div>
      </div>

      <div class="menu">
        <span><u>F</u>ile</span><span><u>E</u>dit</span><span><u>V</u>iew</span><span><u>L</u>ayer</span><span><u>O</u>bject</span><span><u>P</u>ath</span><span><u>T</u>ext</span><span>Filter<u>s</u></span><span>Exte<u>n</u>sions</span><span><u>H</u>elp</span>
      </div>

      <div class="tbar">
        <div class="tb">${ic('docBlue', 22)}</div><div class="tb">${ic('selAll', 22)}</div><div class="tb">${ic('selInv', 22)}</div>
        <div class="vsep"></div>
        <div class="tb">${ic('rotL', 22)}</div><div class="tb">${ic('rotR', 22)}</div><div class="tb">${ic('flipH', 22)}</div><div class="tb">${ic('flipV', 22)}</div>
        <div class="vsep"></div>
        <div class="tb">${ic('lowBot', 22)}</div><div class="tb">${ic('lower', 22)}</div><div class="tb">${ic('raise', 22)}</div><div class="tb">${ic('raiseTop', 22)}</div>
        <div class="vsep"></div>
        <span class="lab" style="margin-left:8px;width:14px">X:</span><div class="field" style="width:44px">1.402</div>${spin()}
        <span class="lab" style="margin-left:10px;width:12px">Y:</span><div class="field" style="width:43px;padding-left:2px">-639.40</div>${spin()}
        <span class="lab" style="margin-left:10px;width:20px">W:</span><div class="field" style="width:43px;padding-left:2px">188.004</div>${spin()}
        <div class="tb" style="margin-left:1px">${ic('lock', 16)}</div>
        <span class="lab" style="margin-left:8px;width:16px">H:</span><div class="field" style="width:44px;padding-left:2px">260.004</div>${spin()}
        <div class="combo">px<i><svg width="9" height="6"><path d="M.5 .5 L4.5 4.5 L8.5 .5" fill="none" stroke="#666"/></svg></i></div>
        <div class="vsep" style="margin:0 6px 0 5px"></div>
        <div class="toggles">
          <div>${ic('tg1', 16)}</div><div>${ic('tg2', 16)}</div><div>${ic('tg3', 16)}</div><div>${ic('tg4', 16)}</div>
        </div>
      </div>

      <div class="main">
        <div class="ltools">
          ${LEFT.map((n, i) => html`<div class="ltool ${i === 0 ? 'on' : ''}">${ic(n, 24)}</div>`)}
          <div class="ltool">${textTool}</div>
          <div class="chevs">${ic('chev', 15)}</div>
        </div>

        <div class="center">
          <div></div>
          <svg class="rl" width="495" height="15" viewBox="51 84 495 15">${hruler}</svg>
          <div class="rl zbox"><svg width="13" height="13" viewBox="0 0 24 24"><path d="M15 15 L21 21" stroke="#aaa" stroke-width="3"/><circle cx="10" cy="10" r="7.5" fill="#eee" stroke="#aaa" stroke-width="2"/></svg></div>
          <div></div>

          <svg class="rl" width="16" height="447" viewBox="35 99 16 447">${vruler}</svg>
          <svg class="rl" width="495" height="447" viewBox="51 99 495 447">${pcb}</svg>
          <div class="vscroll">
            <svg width="15" height="15" style="margin-top:2px"><path d="M3.5 9.5 L7.5 5.5 L11.5 9.5" fill="none" stroke="#505050" stroke-width="1.6"/></svg>
            <div class="vthumb"></div>
            <svg width="15" height="15" style="margin-top:auto;margin-bottom:2px"><path d="M3.5 5.5 L7.5 9.5 L11.5 5.5" fill="none" stroke="#505050" stroke-width="1.6"/></svg>
          </div>
          <div></div>

          <div></div>
          <div class="hscroll">
            <svg width="15" height="15" style="margin-left:2px"><path d="M9.5 3.5 L5.5 7.5 L9.5 11.5" fill="none" stroke="#505050" stroke-width="1.6"/></svg>
            <div class="hthumb"></div>
            <svg width="15" height="15" style="margin-left:auto;margin-right:1px"><path d="M5.5 3.5 L9.5 7.5 L5.5 11.5" fill="none" stroke="#505050" stroke-width="1.6"/></svg>
          </div>
          <div class="zbox">${ic('wheel', 13)}</div>
          <div></div>
        </div>

        <div class="dock">
          <div class="panel">
            <div class="phead">
              ${ic('pen2', 13)}<span style="flex:none">Fill and Stroke (Shift+Ctrl+F)</span>
              <span style="margin-left:auto"></span>
              <div class="btn"><svg width="7" height="7"><path d="M5.5 0 V7 L1 3.5Z" fill="#555"/></svg></div>
              <div class="btn" style="margin-right:4px"><svg width="9" height="9"><path d="M1 1 L8 8 M8 1 L1 8" stroke="#444" stroke-width="1.6"/></svg></div>
            </div>
            <div class="tabs">
              <div class="tab on" style="width:42px"><svg width="9" height="9"><rect width="9" height="9" fill="url(#gBlueD)"/></svg><span><u>F</u>ill</span></div>
              <div class="tab" style="width:84px;padding-left:1px"><svg width="9" height="9"><rect x=".5" y=".5" width="8" height="8" fill="#fff" stroke="#999"/></svg><span>&nbsp;Stroke paint</span></div>
              <div class="tab" style="width:83px"><svg width="11" height="9"><path d="M0 2 H9 M0 5 H11 M0 8 H11" stroke="#555"/></svg><span>&nbsp;Stroke style</span></div>
            </div>
            <div class="tabc">
              <div class="paint">
                <div class="pb" style="width:29px"><svg width="12" height="12"><path d="M1.5 1.5 L10.5 10.5 M10.5 1.5 L1.5 10.5" stroke="#000" stroke-width="2.6"/></svg></div>
                <div class="pb on"><div class="sw flat"></div></div>
                <div class="pb"><div class="sw lin"></div></div>
                <div class="pb"><div class="sw rad"></div></div>
                <div class="pb"><svg class="sw pat" viewBox="0 0 20 20"><path d="M0 0 L5 5 L0 10 L5 15 L0 20 H10 L5 15 L10 10 L15 15 L10 20 H20 L15 15 L20 10 L15 5 L20 0 H10 L15 5 L10 10 L5 5 L10 0Z" fill="#a9c2df"/></svg></div>
                <div class="pb"><div class="sw swa"><u></u></div></div>
                <div class="pb q">?</div>
                <div class="pb on" style="margin-left:auto;width:20px"><svg width="12" height="12" viewBox="0 0 12 12"><path fill-rule="evenodd" d="M6 11.5 C2 9.5 .5 6 .5 3 C.5 .5 4 .5 6 2 C8 .5 11.5 .5 11.5 3 C11.5 6 10 9.5 6 11.5Z M6 4.5 C4.5 3.7 3.5 4 3.5 5.2 C3.5 6.6 4.5 8 6 8.7 C7.5 8 8.5 6.6 8.5 5.2 C8.5 4 7.5 3.7 6 4.5Z" fill="#000"/></svg></div>
                <div class="pb" style="width:20px"><svg width="12" height="12" viewBox="0 0 12 12"><path d="M6 11.5 C2 9 .5 6 .5 3 C.5 .5 4 .5 6 2.5 C8 .5 11.5 .5 11.5 3 C11.5 6 10 9 6 11.5Z" fill="#000"/></svg></div>
              </div>
              <div class="flatc">Flat colour</div>
              <div class="modes">
                <div class="mode on">RGB</div><div class="mode">HSL</div><div class="mode">CMYK</div><div class="mode">Wheel</div><div class="mode">CMS</div>
              </div>
              <div class="rows">
                <div class="row"><span class="lbl"><u>R</u>:</span><div class="bar r"><div class="thumb rgt"><u></u></div></div><div class="field">255</div>${spin(false, true)}</div>
                <div class="row"><span class="lbl"><u>G</u>:</span><div class="bar g"><div class="thumb lft"><u></u></div></div><div class="field">0</div>${spin(true, false)}</div>
                <div class="row"><span class="lbl"><u>B</u>:</span><div class="bar b"><div class="thumb lft"><u></u></div></div><div class="field">0</div>${spin(true, false)}</div>
                <div class="row"><span class="lbl"><u>A</u>:</span><div class="bar a"><div class="thumb rgt"><u></u></div></div><div class="field">255</div>${spin(false, true)}</div>
              </div>
              <div class="bottom">
                <div class="ibx">${ic('wheel', 16)}</div>
                <div class="ibx">${ic('ring', 16)}</div>
                <div style="margin-left:10px">${ic('dropper', 16)}</div>
                <div class="rgba"><span>RGBA<u>:</u></span><div class="field">ff0000ff</div></div>
              </div>
            </div>
            <div class="scale"><div class="sbox"><span>Blur (%)</span><span>0.0</span></div>${spin(true, false)}</div>
            <div class="scale" style="margin-top:4px"><div class="sbox fillb"><span>Opacity (%)</span><span>100.0</span></div>${spin(false, true)}</div>
            <div class="ditem on">${ic('pen2', 16)}<span class="txt">Fill and Stroke (Shift+Ctrl+F)</span><span class="arr"></span></div>
            <div class="drow">
              <div class="ditem" style="width:225px">${ic('objP', 16)}<span class="txt">Object Properties (Shift+Ctrl+O)</span><span class="arr dim"></span></div>
              <div class="ditem" style="width:225px"><span class="tt">T</span><span class="txt">Text and Font (Shift+Ctrl+T)</span><span class="arr dim"></span></div>
            </div>
          </div>
        </div>

        <div class="rbars">
          <div class="rcol">${toolCol(CMD, 22)}<div class="chevs">${ic('chev', 15)}</div></div>
          <div class="rcol">${toolCol(SNAP, 21)}<div class="chevs">${ic('chev', 15)}</div></div>
        </div>
      </div>

      <div class="pal">
        <svg class="x" viewBox="0 0 16 15"><rect width="16" height="15" fill="#fff"/><path d="M1 0 L15 15 M15 0 L1 15" stroke="#6a3030" stroke-width="1.2"/><rect x=".5" y=".5" width="15" height="14" fill="none" stroke="#333"/></svg>
        ${PAL.map(c => html`<i style="background:#${c}"></i>`)}
        <span class="more"></span>
      </div>
      <div class="hs2">
        <svg width="13" height="15" style="margin-left:3px"><path d="M8.5 4 L5 7.5 L8.5 11" fill="none" stroke="#bbb" stroke-width="1.6"/></svg>
        <div class="th"></div>
        <svg width="15" height="15" style="margin-left:auto;margin-right:11px"><path d="M5.5 3.5 L9.5 7.5 L5.5 11.5" fill="none" stroke="#505050" stroke-width="1.6"/></svg>
      </div>
      <div class="status">
        <div class="fs">Fill:<br>Stroke:</div>
        <div class="cols"><div class="f"></div><div class="s"><b></b><span>0.354</span></div></div>
        <div class="ofield"><span style="width:14px">O:</span><div class="field">0</div>${spin(false, true)}</div>
        <div style="display:flex;align-items:center;margin-left:6px;flex:none;gap:0">
          <svg width="14" height="14" viewBox="0 0 14 14"><path d="M1 7 C4 2 10 2 13 7 C10 12 4 12 1 7Z" fill="#ddd" stroke="#777"/><circle cx="7" cy="7" r="2.4" fill="#555"/></svg>
          <div style="width:2px"></div>
          ${ic('lock', 14)}
        </div>
        <div class="rootc">(root)<i><svg width="9" height="6"><path d="M.5 .5 L4.5 4.5 L8.5 .5" fill="none" stroke="#666"/></svg></i></div>
        <div class="msg"><b>Alt:</b> click to select under; scroll mouse-wheel to cycle-select; drag to move selected or select by touch</div>
        <div class="coord"><span>X:</span><b>97.95</b><span>Y:</span><b>-512.96</b></div>
        <div class="zoomf"><span class="zl">Z:</span><div class="field">254%</div>${spin()}</div>
        <div class="grip"></div>
      </div>
    </div>`;
  }
}
